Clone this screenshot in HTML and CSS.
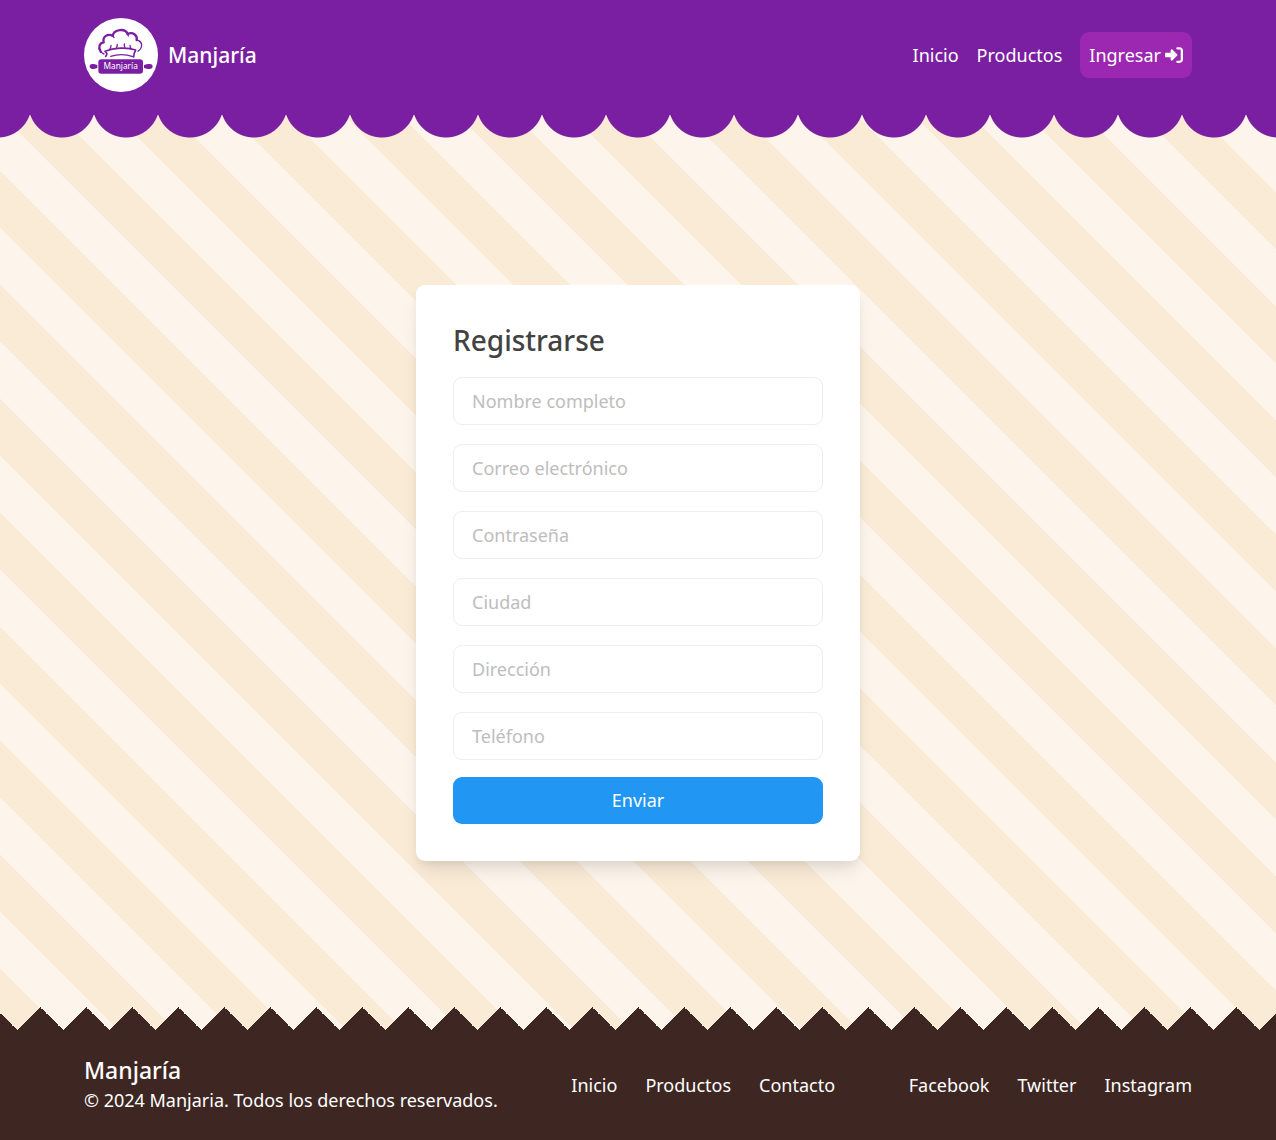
FILE: index.html
```html
<!DOCTYPE html>
<html lang="es">
<head>
  <meta charset="utf-8">
  <meta name="viewport" content="width=device-width, initial-scale=1">
  <title>Manjaría</title>
  <link rel="stylesheet" href="styles.css">
</head>
<body class="page">
  <header class="header">
    <div class="container header-row">
      <a class="brand" href="#">
        <svg class="brand-logo" viewBox="12 12 222 222" role="img" aria-label="Manjaría">
          <circle cx="123" cy="123" r="111" fill="#fff"/>
          <g fill="none" stroke="#7b1fa2" stroke-linecap="round" stroke-linejoin="round">
            <path stroke-width="7" d="M62 113C54 100 58 87 71 85C67 67 83 58 98 65C102 45 136 42 143 60C158 52 173 64 170 78"/>
            <path stroke-width="4" d="M62 113Q66 118 72 120M170 78C188 82 190 100 174 112M96 65Q101 67 102 71M141 60Q145 62 145 66"/>
            <path stroke-width="5" d="M77 127C84 120 80 116 75 112C101 101 141 99 167 108C163 115 161 121 161 129"/>
            <path stroke-width="4" d="M92 127C114 120 139 121 159 128M93 94Q93 101 89 106M112 91Q112 98 109 102M133 90Q132 97 135 102M150 94Q150 101 154 105"/>
          </g>
          <g fill="#7b1fa2">
            <rect x="55" y="136" width="134" height="43" rx="9"/>
            <path d="M52 153V162L42 165Q29 167 29 157Q29 148 42 150ZM192 153V162L203 165Q218 167 218 157Q218 148 203 150Z"/>
          </g>
          <text class="logo-text" x="122" y="165" text-anchor="middle">Manjaría</text>
        </svg>
        <span class="brand-name">Manjaría</span>
      </a>
      <nav class="header-nav" aria-label="Principal">
        <a href="#">Inicio</a>
        <a href="#">Productos</a>
        <a class="login" href="#">Ingresar
          <svg class="login-icon" viewBox="0 0 512 512" aria-hidden="true"><path fill="currentColor" d="M352 96l64 0c17.700 0 32 14.300 32 32l0 256c0 17.700-14.300 32-32 32l-64 0c-17.700 0-32 14.300-32 32s14.300 32 32 32l64 0c53 0 96-43 96-96l0-256c0-53-43-96-96-96l-64 0c-17.700 0-32 14.300-32 32s14.300 32 32 32zm-9.400 182.600c12.500-12.500 12.500-32.800 0-45.300l-128-128c-9.200-9.200-22.900-11.900-34.900-6.900s-19.800 16.600-19.800 29.600l0 64-128 0c-17.700 0-32 14.300-32 32l0 64c0 17.700 14.300 32 32 32l128 0 0 64c0 12.900 7.800 24.600 19.800 29.600s25.700 2.200 34.900-6.900l128-128z"/></svg></a>
      </nav>
    </div>
  </header>
  <div class="scallops"></div>

  <main class="main">
    <form class="card">
      <h1 class="card-title">Registrarse</h1>
      <div class="fields">
        <input class="field" type="text" placeholder="Nombre completo" aria-label="Nombre completo">
        <input class="field" type="email" placeholder="Correo electrónico" aria-label="Correo electrónico">
        <input class="field" type="password" placeholder="Contraseña" aria-label="Contraseña">
        <input class="field" type="text" placeholder="Ciudad" aria-label="Ciudad">
        <input class="field" type="text" placeholder="Dirección" aria-label="Dirección">
        <input class="field" type="tel" placeholder="Teléfono" aria-label="Teléfono">
      </div>
      <button class="submit" type="submit">Enviar</button>
    </form>
  </main>

  <div class="zigzag"></div>
  <footer class="footer">
    <div class="container footer-row">
      <div>
        <h2 class="footer-title">Manjaría</h2>
        <p class="footer-copy">© 2024 Manjaria. Todos los derechos reservados.</p>
      </div>
      <nav class="footer-links" aria-label="Secciones">
        <a href="#">Inicio</a>
        <a href="#">Productos</a>
        <a href="#">Contacto</a>
      </nav>
      <nav class="footer-links" aria-label="Redes sociales">
        <a href="#">Facebook</a>
        <a href="#">Twitter</a>
        <a href="#">Instagram</a>
      </nav>
    </div>
  </footer>
</body>
</html>
```
FILE: styles.css
```css
* {
  box-sizing: border-box;
}

.page {
  display: flex;
  flex-direction: column;
  min-height: 100vh;
  margin: 0;
  color: #424242;
  font: 18px/28px "Noto Sans", sans-serif;
  background: linear-gradient(45deg, #faebd7 25%, #fdf5eb 25%, #fdf5eb 50%, #faebd7 50%, #faebd7 75%, #fdf5eb 75%) 0 0 / 114px 114px;
}

a {
  color: inherit;
  text-decoration: none;
}

.container {
  width: 100%;
  max-width: 1144px;
  margin: 0 auto;
  padding: 0 18px;
}

.header {
  padding: 18px 0 23px;
  color: #fff;
  background: #7b1fa2;
}

.header-row,
.footer-row {
  display: flex;
  align-items: center;
  justify-content: space-between;
}

.brand {
  display: flex;
  align-items: center;
  gap: 10px;
}

.brand-logo {
  display: block;
  width: 74px;
  height: 74px;
}

.logo-text {
  fill: #fff;
  font-size: 25px;
}

.brand-name {
  font-size: 21px;
  font-weight: 500;
}

.header-nav {
  display: flex;
  align-items: center;
  gap: 18px;
}

.login {
  display: flex;
  align-items: center;
  gap: 4px;
  height: 46px;
  padding: 0 9px;
  border-radius: 9px;
  background: #9c27b0;
}

.login-icon {
  width: 18px;
  height: 18px;
}

.scallops {
  height: 23px;
  background: radial-gradient(circle at 50% -11px, #7b1fa2 33px, transparent 34px) center top / 64px 23px repeat-x;
}

.main {
  display: flex;
  flex: 1;
  align-items: center;
  justify-content: center;
  padding: 37px 18px;
}

.card {
  width: 100%;
  max-width: 444px;
  padding: 37px;
  border-radius: 9px;
  background: #fff;
  box-shadow: 0 12px 18px -4px rgb(0 0 0 / 10%), 0 5px 7px -2px rgb(0 0 0 / 5%);
}

.card-title {
  margin: 0 0 18px;
  font-size: 28px;
  font-weight: 500;
  line-height: 37px;
}

.fields {
  display: grid;
  gap: 19px;
  margin-bottom: 17px;
}

.field {
  width: 100%;
  height: 48px;
  padding: 0 18px;
  border: 1px solid #eee;
  border-radius: 9px;
  color: inherit;
  font: inherit;
  background: #fff;
}

.field::placeholder {
  color: #bdbdbd;
}

.submit {
  display: block;
  width: 100%;
  height: 47px;
  border: 0;
  border-radius: 9px;
  color: #fff;
  font: inherit;
  background: #2196f3;
}

.zigzag {
  height: 23px;
  background: conic-gradient(from 135deg at 50% 0, #3e2723 90deg, transparent 0) center top / 46px 23px repeat-x;
}

.footer {
  padding: 25px 0;
  color: #fff;
  background: #3e2723;
}

.footer-title,
.footer-copy {
  margin: 0;
  line-height: 30px;
}

.footer-title {
  font-size: 23px;
  font-weight: 500;
}

.footer-links {
  display: flex;
  gap: 28px;
}
```
